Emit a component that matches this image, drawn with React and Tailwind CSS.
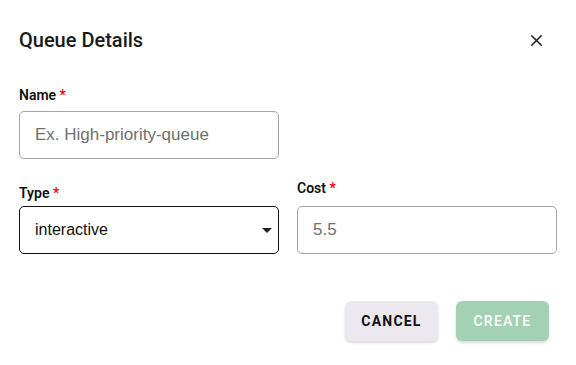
import { X } from 'lucide-react';

function Label({ children, className = '' }) {
  return (
    <div className={`text-[14px] font-semibold leading-[16px] text-[#111] ${className}`}>
      {children} <span className="text-[#e00]">*</span>
    </div>
  );
}

export default function App() {
  return (
    <div className="h-[365px] w-[576px] bg-white font-['Roboto',sans-serif] text-[#222]">
      <div className="flex items-center justify-between pl-[19px] pr-[30px] pt-[28px]">
        <h2 className="text-[20px] font-medium leading-[24px] text-[#1a1a1a]">Queue Details</h2>
        <X className="h-[19px] w-[19px] text-[#222]" strokeWidth={2} />
      </div>

      <div className="px-[19px] pt-[35px]">
        <Label>Name</Label>
        <div className="mt-[8px] flex h-[48px] w-[260px] items-center rounded-[5px] border border-[#a6a6a6] px-[15px] font-['Liberation_Sans',Arial,sans-serif] text-[17px] text-[#707070]">
          Ex. High-priority-queue
        </div>

        <div className="mt-[21px] grid grid-cols-[260px_260px] gap-x-[18px]">
          <div>
            <Label className="mt-[5px]">Type</Label>
            <div className="mt-[5px] flex h-[48px] items-center justify-between rounded-[5px] border border-[#111] pl-[15px] pr-[6px] font-['Liberation_Sans',Arial,sans-serif] text-[16px] text-[#111]">
              interactive
              <svg width="10" height="5" viewBox="0 0 10 5">
                <path d="M0 0 L10 0 L5 5 Z" fill="#222" />
              </svg>
            </div>
          </div>
          <div>
            <Label>Cost</Label>
            <div className="mt-[10px] flex h-[48px] items-center rounded-[5px] border border-[#a6a6a6] px-[15px] font-['Liberation_Sans',Arial,sans-serif] text-[17px] text-[#707070]">
              5.5
            </div>
          </div>
        </div>

        <div className="mt-[47px] flex justify-end gap-[18px] pr-[8px]">
          <button className="h-[40px] w-[93px] rounded-[6px] bg-[#ebe8f0] text-[14px] font-bold tracking-[1.2px] text-[#111] shadow-[0_2px_3px_rgba(0,0,0,0.15)]">
            CANCEL
          </button>
          <button className="h-[40px] w-[93px] rounded-[6px] bg-[#a3d1b3] text-[14px] font-medium tracking-[1.2px] text-white shadow-[0_2px_3px_rgba(0,0,0,0.15)]">
            CREATE
          </button>
        </div>
      </div>
    </div>
  );
}
